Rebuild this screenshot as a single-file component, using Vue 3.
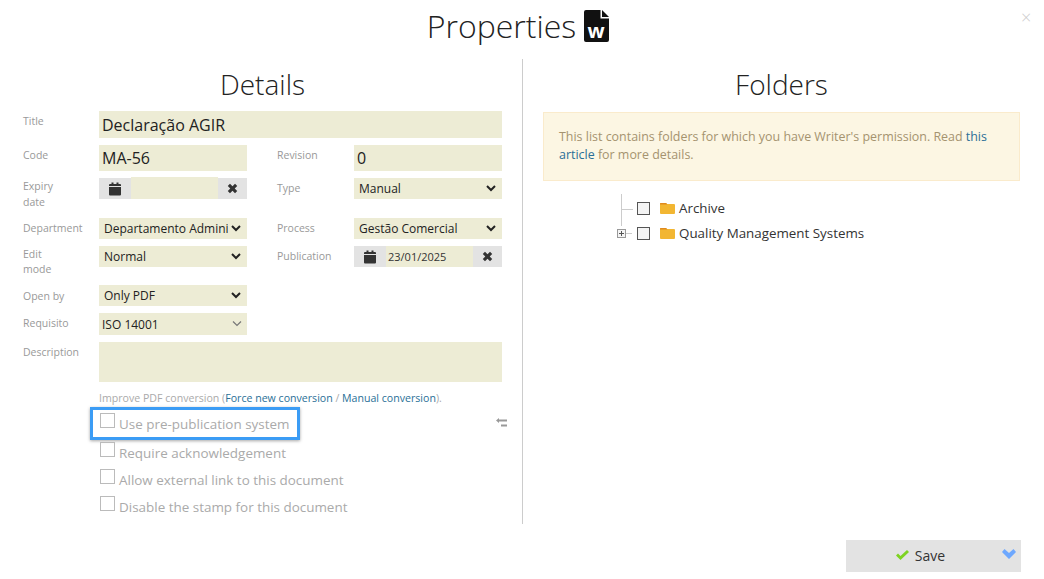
<script setup>
const checks = [
  { label: 'Require acknowledgement' },
  { label: 'Allow external link to this document' },
  { label: 'Disable the stamp for this document' }
]
const calendarPath = 'M1 5h12v7.5a1 1 0 0 1-1 1H2a1 1 0 0 1-1-1zM2 2h1.5V.5h2V2h3V.5h2V2H12a1 1 0 0 1 1 1v1H1V3a1 1 0 0 1 1-1z'
const timesPath = 'M2.2 4.2l2-2L6.5 4.5l2.3-2.3 2 2L8.5 6.5l2.3 2.3-2 2L6.500 8.500l-2.300 2.300-2-2L4.500 6.500z'
</script>

<template>
  <div class="page">
    <button class="close" aria-label="Close">×</button>
    <header class="head">
      <h1>Properties</h1>
      <svg class="doc" width="25" height="32" viewBox="0 0 25 32">
        <path d="M2 0h14.500v8.500h8.500V30a2 2 0 0 1-2 2H2a2 2 0 0 1-2-2V2a2 2 0 0 1 2-2z" fill="#111" />
        <path d="M18 0l7 7h-7z" fill="#111" />
        <text x="12" y="27.500" text-anchor="middle" class="doc-w">w</text>
      </svg>
    </header>

    <main class="cols">
      <section class="left">
        <h2>Details</h2>
        <div class="form">
          <div class="row row-title">
            <label class="lab">Title</label>
            <input class="field big wide" value="Declaração AGIR" />
          </div>
          <div class="row row-code">
            <label class="lab">Code</label>
            <input class="field big" value="MA-56" />
            <label class="lab lab2">Revision</label>
            <input class="field big" value="0" />
          </div>
          <div class="row row-expiry">
            <label class="lab">Expiry<br />date</label>
            <div class="date">
              <span class="addon"><svg width="14" height="14" viewBox="0 0 14 14"><path :d="calendarPath" fill="#333" /></svg></span>
              <span class="date-val raised"></span>
              <span class="addon addon-x"><svg width="11" height="11" viewBox="1.500 1.500 10 10"><path :d="timesPath" fill="#333" /></svg></span>
            </div>
            <label class="lab lab2">Type</label>
            <select class="field sel"><option>Manual</option></select>
          </div>
          <div class="row row-dept">
            <label class="lab">Department</label>
            <select class="field sel"><option>Departamento Administrativo</option></select>
            <label class="lab lab2">Process</label>
            <select class="field sel"><option>Gestão Comercial</option></select>
          </div>
          <div class="row row-edit">
            <label class="lab lab-two">Edit<br />mode</label>
            <select class="field sel"><option>Normal</option></select>
            <label class="lab lab2">Publication</label>
            <div class="date">
              <span class="addon"><svg width="14" height="14" viewBox="0 0 14 14"><path :d="calendarPath" fill="#333" /></svg></span>
              <span class="date-val">23/01/2025</span>
              <span class="addon addon-x"><svg width="11" height="11" viewBox="1.500 1.500 10 10"><path :d="timesPath" fill="#333" /></svg></span>
            </div>
          </div>
          <div class="row row-open">
            <label class="lab">Open by</label>
            <select class="field sel"><option>Only PDF</option></select>
          </div>
          <div class="row row-req">
            <label class="lab">Requisito</label>
            <div class="field req">
              <span>ISO 14001</span>
              <svg width="10" height="7" viewBox="0 0 10 7"><path d="M1 1.500l4 4 4-4" fill="none" stroke="#777" stroke-width="1.200" /></svg>
            </div>
          </div>
          <div class="row row-desc">
            <label class="lab">Description</label>
            <textarea class="field wide desc"></textarea>
          </div>
          <p class="improve">Improve PDF conversion (<a>Force new conversion</a> / <a>Manual conversion</a>).</p>

          <div class="checks">
            <div class="check-line">
              <div class="check hl"><span class="box"></span><span>Use pre-publication system</span></div>
              <svg class="swap" width="11" height="10" viewBox="0 0 11 10"><path d="M0 2.500L3 0v1.500h8v2H3V5zM5 6.500h6v2H5z" fill="#999" /></svg>
            </div>
            <div v-for="c in checks" :key="c.label" class="check"><span class="box"></span><span>{{ c.label }}</span></div>
          </div>
        </div>
      </section>

      <section class="right">
        <h2>Folders</h2>
        <div class="notice">This list contains folders for which you have Writer's permission. Read <a>this</a> <a>article</a> for more details.</div>
        <ul class="tree">
          <li class="node node-first">
            <span class="connector"></span>
            <span class="tbox"></span>
            <svg class="folder" width="15" height="11" viewBox="0 0 15 11"><path d="M1 0h5l1 1h7a1 1 0 0 1 1 1v8a1 1 0 0 1-1 1H1a1 1 0 0 1-1-1V1a1 1 0 0 1 1-1z" fill="#f2b632" /><path d="M0 1.500a1 1 0 0 1 1-1.500h5l1.500 1.500z" fill="#e08a1e" /></svg>
            <span>Archive</span>
          </li>
          <li class="node">
            <span class="expander"><svg width="9" height="9" viewBox="0 0 9 9"><rect x=".5" y=".5" width="8" height="8" fill="#f4f4f4" stroke="#999" /><path d="M2 4.500h5M4.500 2v5" stroke="#555" /></svg></span>
            <span class="tbox"></span>
            <svg class="folder" width="15" height="11" viewBox="0 0 15 11"><path d="M1 0h5l1 1h7a1 1 0 0 1 1 1v8a1 1 0 0 1-1 1H1a1 1 0 0 1-1-1V1a1 1 0 0 1 1-1z" fill="#f2b632" /><path d="M0 1.500a1 1 0 0 1 1-1.500h5l1.500 1.500z" fill="#e08a1e" /></svg>
            <span>Quality Management Systems</span>
          </li>
        </ul>
      </section>
    </main>

    <footer class="foot">
      <button class="save">
        <svg width="13" height="10" viewBox="0 0 13 10"><path d="M0 5.500l2-2 2.500 2.500L11 0l2 2-8.500 8z" fill="#7ed321" /></svg>
        <span>Save</span>
        <svg class="more" width="14" height="10" viewBox="0 0 14 10"><path d="M0 3l2.500-3L7 4l4.500-4L14 3 7 10z" fill="#6ea8fe" /></svg>
      </button>
    </footer>
  </div>
</template>

<style scoped>
.page {
  position: relative;
  width: 1044px;
  height: 579px;
  overflow: hidden;
  background: #fff;
  font-family: "Open Sans", sans-serif;
  color: #333;
  box-sizing: border-box;
}
.close {
  position: absolute;
  top: 7px;
  left: 1021px;
  border: 0;
  background: none;
  padding: 0;
  font: 300 18px/20px "Open Sans", sans-serif;
  color: #ccc;
}
.head {
  height: 59px;
  display: flex;
  justify-content: center;
  align-items: flex-start;
  gap: 8px;
  padding-right: 8px;
}
.head h1 {
  margin: 4px 0 0;
  font-size: 32px;
  line-height: 44px;
  font-weight: 300;
  color: #222;
}
.doc { margin-top: 10px; }
.doc-w {
  font: 700 20px "Open Sans", sans-serif;
  fill: #fff;
}
.cols { display: flex; height: 465px; }
.left {
  box-sizing: border-box;
  padding-left: 23px;
  padding-right: 20px;
  border-right: 1px solid #ccc;
  width: 523px;
}
.right {
  flex: 1;
  padding: 0 24px 0 20px;
}
h2 {
  margin: 5px 0 0;
  font-size: 28px;
  line-height: 40px;
  font-weight: 300;
  text-align: center;
  color: #222;
}
.form { margin-top: 7px; }
.row {
  display: grid;
  grid-template-columns: 76px 148px 30px 77px 148px;
  align-items: start;
}
.lab {
  font-size: 10.500px;
  line-height: 16px;
  color: #999;
}
.lab2 { grid-column: 4; }
.lab-two { line-height: 15px; }
.field {
  box-sizing: border-box;
  background: #edecd5;
  border: 0;
  margin: 0;
  border-radius: 0;
  font-family: "Open Sans", sans-serif;
  color: #222;
  outline: none;
  width: 100%;
}
.big { height: 26px; font-size: 16px; padding: 0 3px; }
.wide { grid-column: 2 / 6; }
.row-title { height: 34px; }
.row-title .big { height: 27px; }
.row-title .lab { margin-top: 2px; }
.row-code { height: 33px; }
.row-code .lab { margin-top: 2px; }
.row-expiry { height: 40px; }
.row-expiry .lab2 { margin-top: 2px; }
.row-dept { height: 28px; }
.row-dept .lab { margin-top: 2px; }
.row-edit { height: 39px; }
.row-edit .lab { margin-top: 2px; }
.row-edit .lab-two { margin-top: 1px; }
.row-open { height: 28px; }
.row-open .lab { margin-top: 3px; }
.row-req { height: 29px; }
.row-req .lab { margin-top: 2px; }
.row-desc { height: 48px; }
.row-desc .lab { margin-top: 2px; }
.sel {
  height: 21px;
  font-size: 12px;
  padding: 0 0 0 1px;
  border-right: 3px solid #edecd5;
}
.req {
  height: 22px;
  font-size: 12px;
  padding: 0 5px 0 3px;
  display: flex;
  align-items: center;
  justify-content: space-between;
}
.req svg { margin-top: -2px; }
.desc { height: 40px; resize: none; display: block; }
.date {
  display: flex;
  height: 21px;
  background: #edecd5;
  font-size: 11px;
  line-height: 21px;
  color: #333;
}
.addon {
  background: #e3e3e3;
  width: 32px;
  flex: none;
  display: flex;
  align-items: center;
  justify-content: center;
}
.addon-x { width: 29px; margin-left: auto; }
.date-val { flex: 1; padding-left: 2px; }
.date-val.raised { background: #edecd5; height: 22px; margin-top: -1px; }
.improve {
  margin: 0 0 0 76px;
  font-size: 10.600px;
  line-height: 16px;
  color: #aaa;
}
.improve a { color: #2a6f97; text-decoration: none; }
.checks { margin: 1px 0 0 77px; }
.check-line {
  display: flex;
  justify-content: space-between;
  align-items: center;
  margin-bottom: -1px;
}
.swap { margin-right: -5px; margin-top: -2px; }
.check {
  display: flex;
  align-items: center;
  gap: 4px;
  height: 27.300px;
  font-size: 13.450px;
  color: #aaa;
}
.box {
  width: 15px;
  height: 15px;
  box-sizing: border-box;
  border: 1px solid #bbb;
  margin-top: -7px;
  flex: none;
}
.hl {
  border: 3px solid #3b9cf5;
  box-shadow: 0 1px 3px rgba(0, 0, 0, .35);
  height: 33px;
  box-sizing: border-box;
  margin: 0 0 0 -10px;
  padding: 0 7px;
  background: #fff;
}
.notice {
  margin-top: 8px;
  box-sizing: border-box;
  height: 69px;
  padding: 15px 15px;
  background: #fcf6e3;
  border: 1px solid #faebcc;
  font-size: 12.450px;
  line-height: 18px;
  color: #a5936f;
}
.notice a { color: #2a6f97; text-decoration: none; }
.tree {
  list-style: none;
  margin: 15px 0 0;
  padding: 0 0 0 73px;
  font-size: 13.360px;
  color: #333;
}
.node {
  position: relative;
  height: 25px;
  display: flex;
  align-items: center;
  padding-left: 21px;
}
.node span:last-child { position: relative; top: -1px; }
.connector {
  position: absolute;
  left: 5px;
  top: -2px;
  width: 11px;
  height: 15px;
  border-left: 1px solid #ccc;
  border-bottom: 1px solid #ccc;
}
.connector::after {
  content: "";
  position: absolute;
  left: -1px;
  top: 15px;
  height: 17px;
  border-left: 1px solid #ccc;
}
.expander {
  position: absolute;
  left: 1px;
  top: 8px;
  width: 9px;
  height: 9px;
  display: flex;
}
.expander::after {
  content: "";
  position: absolute;
  left: 9px;
  top: 4px;
  width: 6px;
  border-top: 1px solid #ccc;
}
.tbox {
  width: 13px;
  height: 13px;
  box-sizing: border-box;
  border: 1px solid #555;
  background: #f4f4f4;
  flex: none;
}
.folder { margin: 0 4px 0 10px; flex: none; }
.foot {
  position: absolute;
  top: 540px;
  left: 846px;
}
.save {
  position: relative;
  width: 175px;
  height: 32px;
  border: 0;
  background: #e3e3e3;
  display: flex;
  align-items: center;
  justify-content: center;
  gap: 6px;
  padding: 0 26px 2px 0;
  font: 14px "Open Sans", sans-serif;
  color: #333;
}
.more {
  position: absolute;
  right: 5px;
  top: 9px;
}
</style>
